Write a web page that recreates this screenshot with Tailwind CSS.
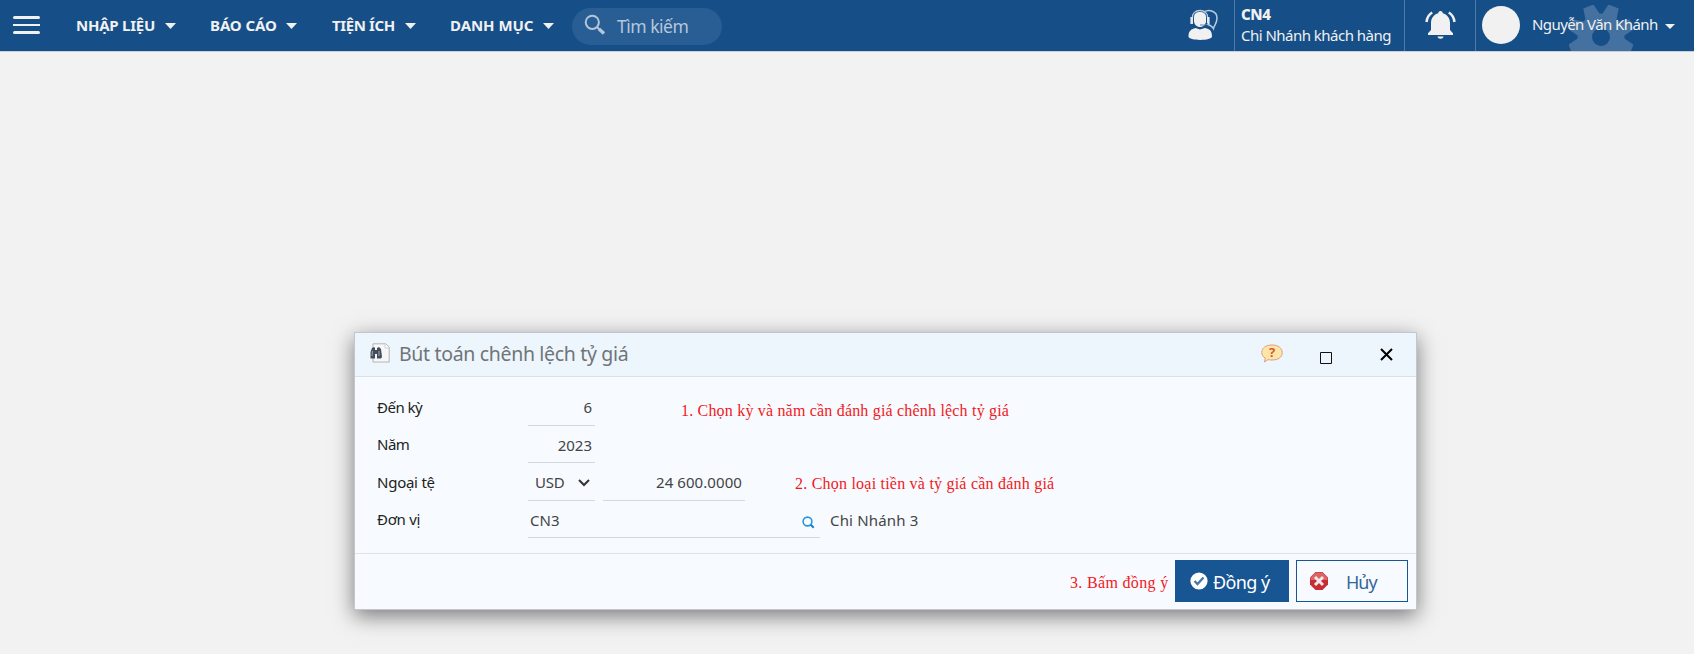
<!DOCTYPE html>
<html lang="vi">
<head>
<meta charset="utf-8">
<title>Bút toán chênh lệch tỷ giá</title>
<script src="https://cdn.jsdelivr.net/npm/@tailwindcss/browser@4"></script>
</head>
<body class="w-[1694px] h-[654px] overflow-hidden bg-[#f2f2f2] font-['Noto_Sans','Open_Sans',sans-serif] whitespace-nowrap">
<header class="flex h-[52px] w-full border-b border-[#c9cfd6] bg-[#164f88] text-[#f1f1f1]">
  <div class="flex w-[76px] flex-col pl-[13px] pt-4">
    <div class="h-[3px] w-[27px] rounded-sm bg-[#f1f1f1]"></div>
    <div class="mt-[5px] h-[2px] w-[27px] bg-[#f1f1f1]"></div>
    <div class="mt-[5px] h-[3px] w-[27px] rounded-sm bg-[#f1f1f1]"></div>
  </div>
  <nav class="flex w-[496px] pt-[15px] text-[15px] leading-[21px] font-bold">
    <div class="flex w-[134px]"><span class="w-[89px] tracking-[-0.25px]">NHẬP LIỆU</span><svg class="mt-2 h-[6px] w-[11px]" viewBox="0 0 11 6"><path d="M0 0h11L5.5 6z" fill="#f1f1f1"/></svg></div>
    <div class="flex w-[122px]"><span class="w-[76px] tracking-[-0.1px]">BÁO CÁO</span><svg class="mt-2 h-[6px] w-[11px]" viewBox="0 0 11 6"><path d="M0 0h11L5.5 6z" fill="#f1f1f1"/></svg></div>
    <div class="flex w-[118px]"><span class="w-[73px] tracking-[-0.4px]">TIỆN ÍCH</span><svg class="mt-2 h-[6px] w-[11px]" viewBox="0 0 11 6"><path d="M0 0h11L5.5 6z" fill="#f1f1f1"/></svg></div>
    <div class="flex w-[122px]"><span class="w-[93px] tracking-[-0.05px]">DANH MỤC</span><svg class="mt-2 h-[6px] w-[11px]" viewBox="0 0 11 6"><path d="M0 0h11L5.5 6z" fill="#f1f1f1"/></svg></div>
  </nav>
  <div class="mt-2 flex h-[37px] w-[150px] rounded-full bg-[#295e95] pl-[12px] text-[#b5c7da]">
    <svg class="mt-[6px] h-[22px] w-[22px]" viewBox="0 0 22 22" fill="none" stroke="#b2c5d9"><circle cx="8.3" cy="8.3" r="6.6" stroke-width="2"/><path d="M13 13l2.6 2.6" stroke-width="2"/><path d="M15 15l5 4.6" stroke-width="3.4"/></svg>
    <span class="ml-[11px] mt-[6px] text-[17.5px] leading-6 tracking-[-0.5px]">Tìm kiếm</span>
  </div>
  <div class="ml-auto flex h-[51px]">
    <div class="w-[46px] pt-[9px]">
      <svg class="h-8 w-8" viewBox="0 0 32 32" fill="none"><path d="M16 3c5-3 13-1 13 6 0 6-3 7-3.500 10.500-1.500-2.500-3.500-3.300-6.500-4.500" stroke="#b9cbdd" stroke-width="1.500"/><path d="M4.500 9C4 4 7.500 1.500 12 1.500S20 4 19.500 9" stroke="#b9cbdd" stroke-width="1.300"/><path d="M6 8c0-4 3-5 6-5s6 1 6 5v5c-1 4-4 5-6 5s-5-1-6-5z" fill="#f1f1f1"/><path d="M3.700 8v7M20.300 8v7" stroke="#e3e9ef" stroke-width="2.600"/><path d="M20 14.500c-2 2-5 1.500-8 1.500" stroke="#5583ae"/><path d="M.5 27.500c0-6 3-7.500 7-8.500l4.500 1.500 5-1.500c5 1 7 3 7 8.500 0 4.500-23.500 4.500-23.500 0z" fill="#f1f1f1"/></svg>
    </div>
    <div class="flex w-[170px] flex-col border-l border-[#4f7ba8] pl-[6px] pt-1 text-[15px] leading-[21px]">
      <b class="font-extrabold tracking-[-0.35px]">CN4</b><span class="tracking-[-0.52px]">Chi Nhánh khách hàng</span>
    </div>
    <div class="w-[71px] border-l border-[#4f7ba8] pl-5 pt-[10px]">
      <svg class="h-[30px] w-[31px]" viewBox="0 0 31 30"><path d="M15.500 1c1.500 0 2.200 1 2.200 2.200C22 4.200 25 8 25 13v7l3 3.200V25H3v-1.800L6 20v-7c0-5 3-8.800 7.300-9.800C13.300 2 14 1 15.500 1zM12.500 26.500h6c-.3 3-5.700 3-6 0z" fill="#f1f1f1"/><path d="M1.500 12C2 7.500 4 4.500 7.200 2.500M29.500 12c-.5-4.500-2.500-7.500-5.700-9.500" fill="none" stroke="#f1f1f1" stroke-width="2.500"/></svg>
    </div>
    <div class="relative flex w-[219px] border-l border-[#4f7ba8] pl-[6px] pt-[6px]">
      <svg class="absolute left-[93px] top-[5px] h-[46px] w-[64px]" viewBox="-32 -32 64 46">
        <circle r="18" stroke="#4471a0" stroke-width="0" fill="#4471a0"/>
        <circle r="16.500" fill="none" stroke="#4471a0" stroke-width="14"/>
        <g fill="#4471a0"><path id="tooth" d="M-8-20L-5.500-33h11L8-20z" transform="rotate(-22.500)"/><path d="M-8-20L-5.500-33h11L8-20z" transform="rotate(22.500)"/><path d="M-8-20L-5.500-33h11L8-20z" transform="rotate(-67.500)"/><path d="M-8-20L-5.500-33h11L8-20z" transform="rotate(67.500)"/><path d="M-8-20L-5.500-33h11L8-20z" transform="rotate(-112.500)"/><path d="M-8-20L-5.500-33h11L8-20z" transform="rotate(112.500)"/></g>
        <circle r="9" fill="#164f88"/>
      </svg>
      <div class="h-[38px] w-[38px] rounded-full bg-[#f1f1f1]"></div>
      <span class="relative ml-[12px] mt-[8px] w-[133px] text-[15px] leading-[21px] tracking-[-0.58px]">Nguyễn Văn Khánh</span>
      <svg class="relative mt-[18px] h-[5px] w-[10px]" viewBox="0 0 10 5"><path d="M0 0h10L5 5z" fill="#f1f1f1"/></svg>
    </div>
  </div>
</header>

<main class="ml-[354px] mt-[280px] flex h-[278px] w-[1063px] flex-col border border-[#c3c7cb] bg-[#f7fbff] text-[15px] leading-[21px] text-[#444] shadow-[0_6px_20px_rgba(0,0,0,0.5)]">
  <div class="flex h-[44px] border-b border-[#dcdfe3] bg-[#edf6fc]">
    <svg class="ml-[15px] mt-[10px] h-5 w-5" viewBox="0 0 20 20"><path d="M3 .8h12.500L19.200 4v15H3z" fill="#f7f7f7" stroke="#b5b5b5"/><path d="M15 1v4h4" fill="#fff" stroke="#d0d0d0"/><path d="M2 5l2-1 1 1v2h2V5l2-1 2 2 1 8-1 1.500H7V11H5v4.500H.5V9z" fill="#454d5c"/><path d="M2.500 8l-.5 5M9 8v5" stroke="#929caf" stroke-width="1.200"/></svg>
    <span class="ml-[9px] mt-[7px] w-[862px] text-[19.500px] leading-7 tracking-[-0.33px] text-[#707478]">Bút toán chênh lệch tỷ giá</span>
    <svg class="mt-[11px] h-5 w-[22px]" viewBox="0 0 22 20"><path d="M11 1c6 0 10.200 3 10.200 7.700S17 16 11 16c-2 0-3-.2-4-.5L3.500 18l.8-4C2 13 .8 11 .8 8.500.8 4 5 1 11 1z" fill="#ffe6a5" stroke="#dc9e88"/><text x="11" y="13" text-anchor="middle" font-family="Noto Sans" font-size="13" font-weight="700" fill="#d6593b">?</text></svg>
    <svg class="ml-[37px] mt-[19px] h-3 w-3" viewBox="0 0 12 12"><path d="M.5.5h11v11H.5z" fill="none" stroke="#111"/></svg>
    <svg class="ml-[48px] mt-[15px] h-[13px] w-[13px]" viewBox="0 0 13 13"><path d="M1 1l11 11M12 1L1 12" stroke="#000" stroke-width="2"/></svg>
  </div>
  <section class="flex h-[177px] flex-col border-b border-[#dfe3e6] pl-[22px] pt-[12px]">
    <div class="flex h-[37px]">
      <label class="mt-[8px] w-[151px] tracking-[-0.5px] text-[#222]">Đến kỳ</label>
      <div class="w-[67px] border-b border-[#d5d9dd] pr-[3px] pt-[8px] text-right">6</div>
      <span class="ml-[86px] mt-[11px] font-['Liberation_Serif',serif] text-[16px] tracking-[0.19px] text-[#f21822]">1. Chọn kỳ và năm cần đánh giá chênh lệch tỷ giá</span>
    </div>
    <div class="flex h-[37px]">
      <label class="mt-[8px] w-[151px] tracking-[-0.5px] text-[#222]">Năm</label>
      <div class="w-[67px] border-b border-[#d5d9dd] pr-[3px] pt-[9px] text-right">2023</div>
    </div>
    <div class="flex h-[38px]">
      <label class="mt-[9px] w-[151px] tracking-[-0.25px] text-[#222]">Ngoại tệ</label>
      <div class="flex w-[67px] border-b border-[#d5d9dd] pl-[7px] pt-[9px]"><span class="w-[43px] tracking-[-0.2px]">USD</span><svg class="mt-[7px] h-2 w-3" viewBox="0 0 12 8"><path d="M1 1l5 5 5-5" fill="none" stroke="#333" stroke-width="2"/></svg></div>
      <div class="ml-2 w-[142px] border-b border-[#d5d9dd] pr-[3px] pt-[9px] text-right tracking-[0.08px]">24 600.0000</div>
      <span class="ml-[50px] mt-[10px] font-['Liberation_Serif',serif] text-[16px] tracking-[0.22px] text-[#f21822]">2. Chọn loại tiền và tỷ giá cần đánh giá</span>
    </div>
    <div class="flex h-[37px]">
      <label class="mt-[8px] w-[151px] tracking-[-0.3px] text-[#222]">Đơn vị</label>
      <div class="flex w-[292px] border-b border-[#d5d9dd] pl-[2px] pt-[9px]"><span class="w-[272px]">CN3</span><svg class="mt-[6px] h-[13px] w-[13px]" viewBox="0 0 13 13"><circle cx="5.500" cy="5.500" r="4.400" fill="none" stroke="#2c96dc" stroke-width="1.600"/><path d="M8.500 8.500l3.200 3.200" stroke="#187fcb" stroke-width="2"/></svg></div>
      <span class="ml-[10px] mt-[9px] tracking-[0.18px]">Chi Nhánh 3</span>
    </div>
  </section>
  <footer class="flex h-[55px] pl-[715px] pt-[6px]">
    <span class="mt-[12px] w-[105px] font-['Liberation_Serif',serif] text-[16px] tracking-[0.33px] text-[#f21822]">3. Bấm đồng ý</span>
    <button class="flex h-[42px] w-[114px] bg-[#185593] pl-[15px] text-white">
      <svg class="mt-3 h-[18px] w-[18px]" viewBox="0 0 18 18"><circle cx="9" cy="9" r="8.600" fill="#fff"/><path d="M4.500 9l3 3 6-6.500" fill="none" stroke="#4479aa" stroke-width="2.300"/></svg>
      <span class="ml-[5px] mt-[10px] text-[18px] leading-6 tracking-[-0.6px]">Đồng ý</span>
    </button>
    <button class="ml-[7px] flex h-[42px] w-[112px] border border-[#185593] pl-[13px] text-[#336699]">
      <svg class="mt-[11px] h-[18px] w-[18px]" viewBox="0 0 18 18"><path d="M5.500 0h7L18 5.500v7L12.500 18h-7L0 12.500v-7z" fill="#c62c31"/><path d="M5.500.5h7l5 5V8H.5V5.500z" fill="#dc6468"/><path d="M5 5l8 8M13 5l-8 8" stroke="#f1e8e8" stroke-width="3"/></svg>
      <span class="ml-[18px] mt-[9px] text-[18px] leading-6 tracking-[-1px]">Hủy</span>
    </button>
  </footer>
</main>
</body>
</html>
